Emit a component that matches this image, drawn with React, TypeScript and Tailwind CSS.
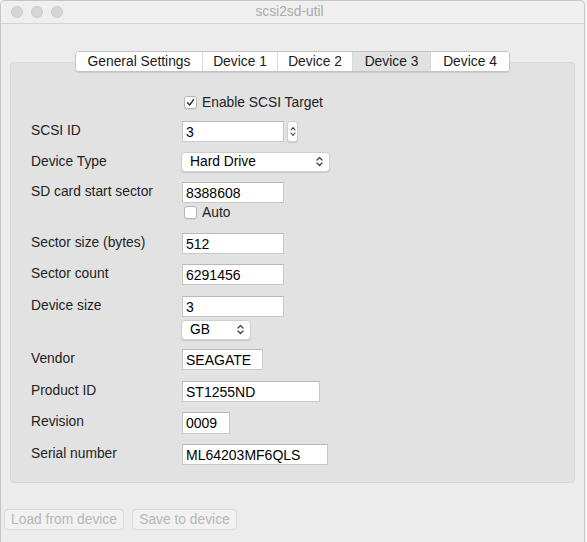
import React from "react";

const font = { fontFamily: '"Liberation Sans", Arial, sans-serif' };

function Chevrons() {
  return (
    <svg width="7" height="11" viewBox="0 0 7 11">
      <path d="M1 4 L3.5 1.5 L6 4" fill="none" stroke="#3a3a3a" strokeWidth="1.2" strokeLinecap="round" strokeLinejoin="round" />
      <path d="M1 7 L3.5 9.5 L6 7" fill="none" stroke="#3a3a3a" strokeWidth="1.2" strokeLinecap="round" strokeLinejoin="round" />
    </svg>
  );
}

function TextBox({ value, w }: { value: string; w: string }) {
  return (
    <div
      className={`h-[21px] ${w} bg-white border border-[#c9c9c9] border-t-[#b9b9b9] flex items-center pl-[3px] pt-[1px] text-[14px] text-black leading-none`}
    >
      {value}
    </div>
  );
}

function Select({ value, w }: { value: string; w: string }) {
  return (
    <div
      className={`h-[20px] ${w} bg-white rounded-[4px] border border-[#d0d0d0] shadow-[0_1px_1px_rgba(0,0,0,0.12)] flex items-center justify-between pl-[8px] pr-[6px] text-[13.8px] text-black leading-none`}
    >
      <span>{value}</span>
      <Chevrons />
    </div>
  );
}

function CheckBox({ checked }: { checked: boolean }) {
  return (
    <div className="w-[13px] h-[13px] bg-white rounded-[3px] border border-[#b4b4b4] shadow-[0_1px_0_rgba(0,0,0,0.06)] flex items-center justify-center">
      {checked && (
        <svg width="9" height="9" viewBox="0 0 9 9">
          <path d="M1.5 4.8 L3.6 7 L7.6 1.6" fill="none" stroke="#2a2a2a" strokeWidth="1.4" strokeLinecap="round" strokeLinejoin="round" />
        </svg>
      )}
    </div>
  );
}

function Row({ label, mt, children }: { label: string; mt: string; children: React.ReactNode }) {
  return (
    <div className={`flex ${mt}`}>
      <div className="w-[171px] pl-[20px] text-[13.8px] text-[#222] leading-none pt-[3px]">{label}</div>
      <div className="flex flex-col">{children}</div>
    </div>
  );
}

const tabs = ["General Settings", "Device 1", "Device 2", "Device 3", "Device 4"];
const tabW = ["w-[126px]", "w-[75px]", "w-[75px]", "w-[78px]", "w-[79px]"];

export default function App() {
  return (
    <div className="w-[587px] h-[542px] bg-[#f4f4f4] flex" style={font}>
      <div className="w-[585px] h-[542px] bg-[#ececec] border-l border-r border-t border-[#c6c6c6] rounded-t-[5px] flex flex-col">
        {/* Title bar */}
        <div className="h-[23px] bg-[#efefef] border-b border-[#d3d3d3] rounded-t-[5px] flex items-center relative shrink-0">
          <div className="flex gap-[8px] pl-[10px]">
            <div className="w-[12px] h-[12px] rounded-full bg-[#d6d6d6] border border-[#cacaca]" />
            <div className="w-[12px] h-[12px] rounded-full bg-[#d6d6d6] border border-[#cacaca]" />
            <div className="w-[12px] h-[12px] rounded-full bg-[#d6d6d6] border border-[#cacaca]" />
          </div>
          <div className="flex-1 text-center text-[13.8px] text-[#ababab] pr-[68px] leading-none">scsi2sd-util</div>
        </div>

        {/* Tabs */}
        <div className="flex justify-center mt-[27px] relative z-10">
          <div className="flex h-[21px] bg-white border border-[#c3c3c3] rounded-[4px] shadow-[0_1px_1px_rgba(0,0,0,0.1)] overflow-hidden">
            {tabs.map((t, i) => (
              <div
                key={t}
                className={`${tabW[i]} flex items-center justify-center text-[13.8px] text-[#1a1a1a] leading-none ${
                  i > 0 ? "border-l border-[#d9d9d9]" : ""
                } ${i === 3 ? "bg-[#e1e1e1]" : "bg-white"}`}
              >
                {t}
              </div>
            ))}
          </div>
        </div>

        {/* Panel */}
        <div className="mx-[9px] mt-[-10px] h-[421px] bg-[#e2e2e2] border border-[#d8d8d8] rounded-[4px] flex flex-col">
          <div className="flex items-center mt-[33px] pl-[173px] gap-[5px]">
            <CheckBox checked />
            <span className="text-[13.8px] text-[#222] leading-none">Enable SCSI Target</span>
          </div>

          <Row label="SCSI ID" mt="mt-[11px]">
            <div className="flex items-center gap-[3px]">
              <TextBox value="3" w="w-[102px]" />
              <div className="w-[11px] h-[21px] bg-white rounded-[3px] border border-[#cfcfcf] shadow-[0_1px_1px_rgba(0,0,0,0.1)] flex items-center justify-center">
                <svg width="6" height="13" viewBox="0 0 6 13">
                  <path d="M1 5 L3 2.5 L5 5" fill="none" stroke="#3a3a3a" strokeWidth="1.1" strokeLinecap="round" strokeLinejoin="round" />
                  <path d="M1 8 L3 10.5 L5 8" fill="none" stroke="#3a3a3a" strokeWidth="1.1" strokeLinecap="round" strokeLinejoin="round" />
                </svg>
              </div>
            </div>
          </Row>

          <Row label="Device Type" mt="mt-[10px]">
            <div className="-ml-[1px]">
              <Select value="Hard Drive" w="w-[149px]" />
            </div>
          </Row>

          <Row label="SD card start sector" mt="mt-[10px]">
            <TextBox value="8388608" w="w-[102px]" />
            <div className="flex items-center gap-[5px] mt-[3px] pl-[2px]">
              <CheckBox checked={false} />
              <span className="text-[13.8px] text-[#222] leading-none">Auto</span>
            </div>
          </Row>

          <Row label="Sector size (bytes)" mt="mt-[13px]">
            <TextBox value="512" w="w-[102px]" />
          </Row>

          <Row label="Sector count" mt="mt-[10px]">
            <TextBox value="6291456" w="w-[102px]" />
          </Row>

          <Row label="Device size" mt="mt-[11px]">
            <TextBox value="3" w="w-[102px]" />
            <div className="-ml-[1px] mt-[3px]">
              <Select value="GB" w="w-[70px]" />
            </div>
          </Row>

          <Row label="Vendor" mt="mt-[9px]">
            <TextBox value="SEAGATE" w="w-[81px]" />
          </Row>

          <Row label="Product ID" mt="mt-[11px]">
            <TextBox value="ST1255ND" w="w-[138px]" />
          </Row>

          <Row label="Revision" mt="mt-[10px]">
            <div className="h-[22px] w-[48px] bg-white border border-[#c9c9c9] border-t-[#b9b9b9] flex items-center pl-[3px] pt-[1px] text-[14px] text-black leading-none">
              0009
            </div>
          </Row>

          <Row label="Serial number" mt="mt-[10px]">
            <TextBox value="ML64203MF6QLS" w="w-[146px]" />
          </Row>
        </div>

        {/* Buttons */}
        <div className="flex gap-[8px] mt-[26px] pl-[3px]">
          <div className="w-[120px] h-[21px] rounded-[4px] bg-[#f1f1f1] border border-[#dadada] flex items-center justify-center text-[13.8px] text-[#b7b7b7] leading-none">
            Load from device
          </div>
          <div className="w-[105px] h-[21px] rounded-[4px] bg-[#f1f1f1] border border-[#dadada] flex items-center justify-center text-[13.8px] text-[#b7b7b7] leading-none">
            Save to device
          </div>
        </div>
      </div>
    </div>
  );
}
